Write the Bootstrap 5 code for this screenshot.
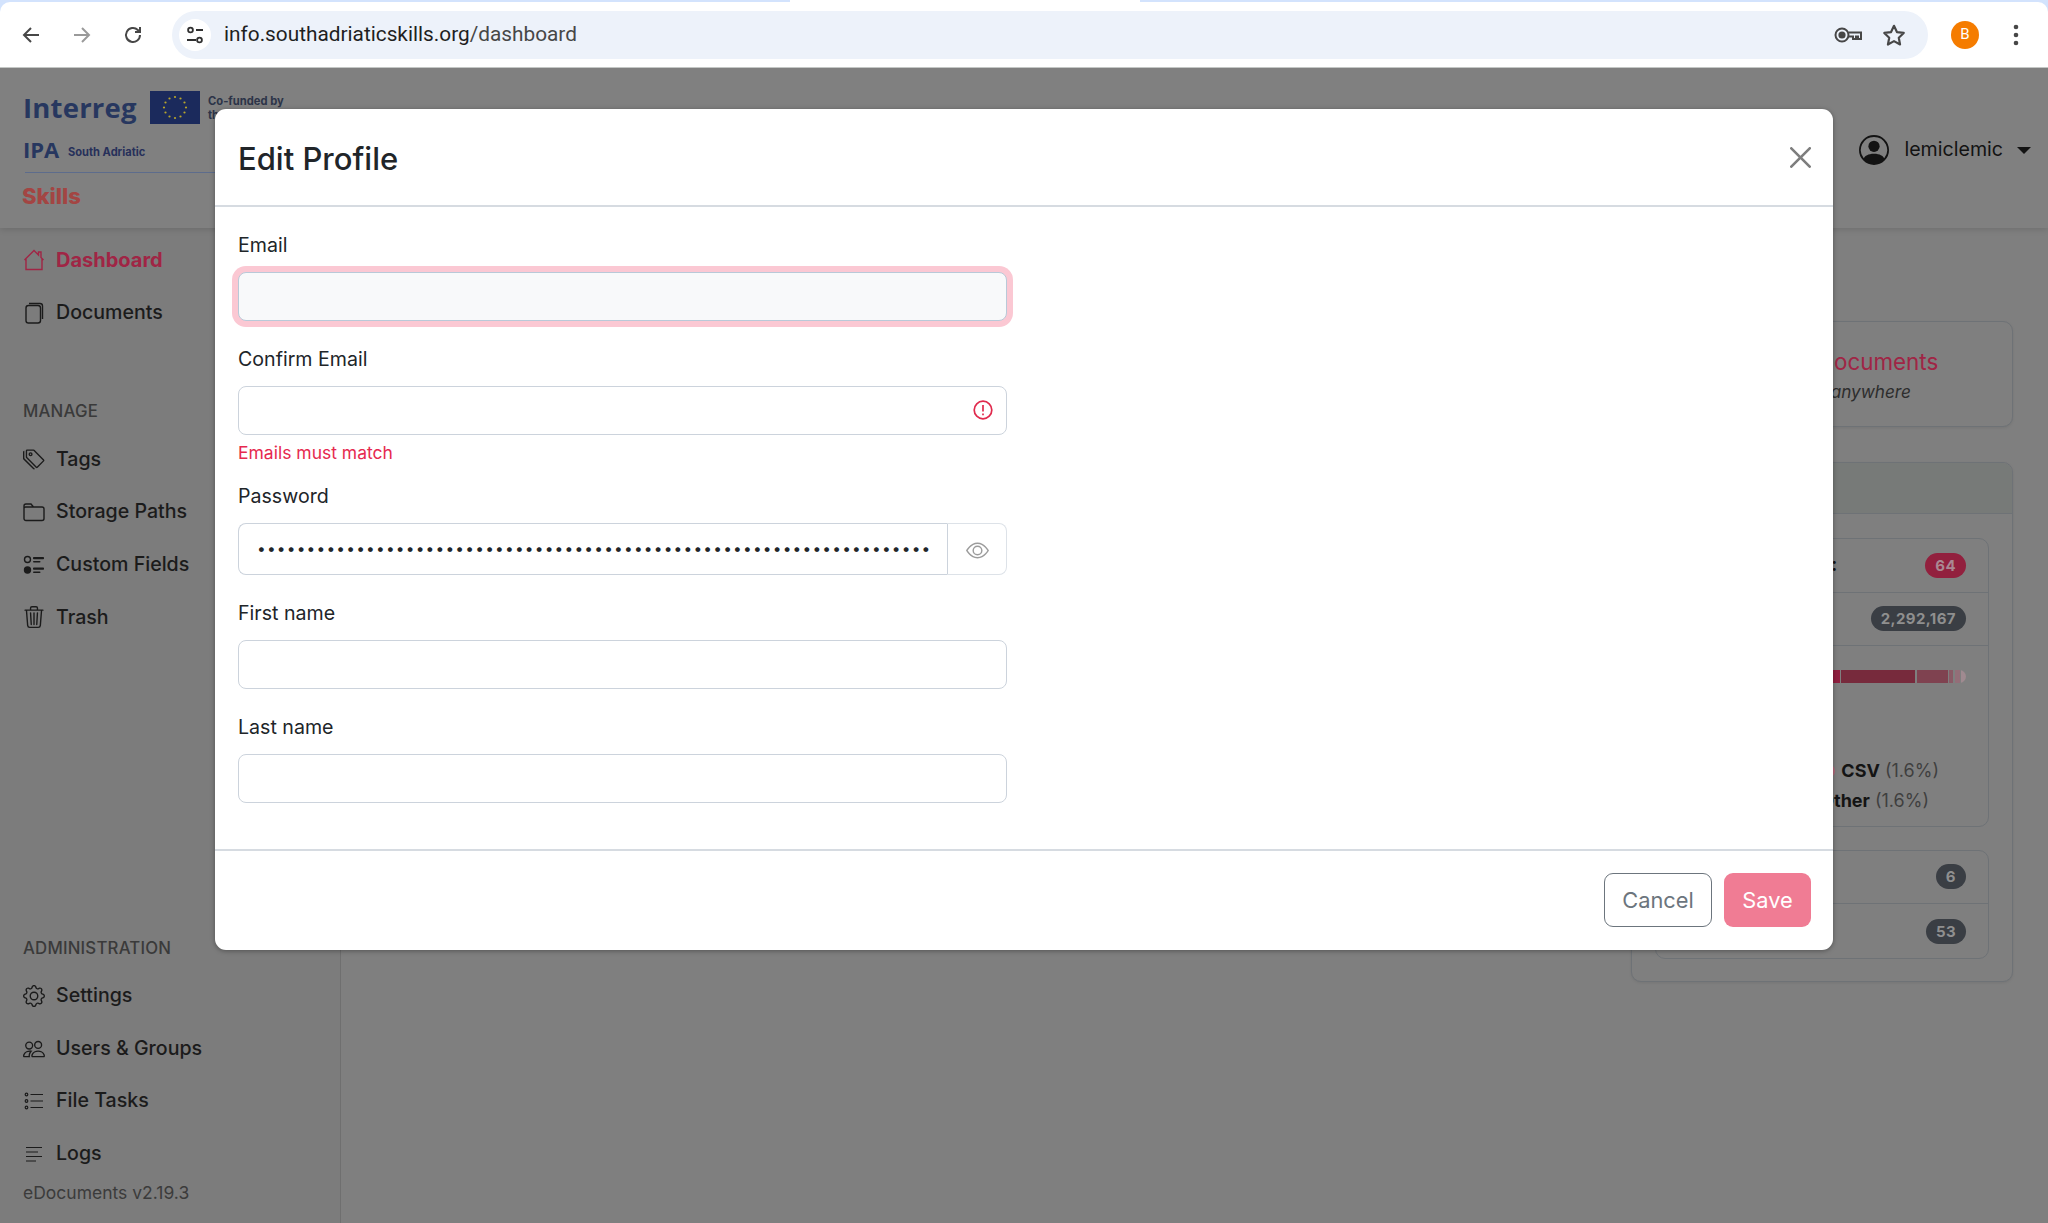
<!DOCTYPE html>
<html lang="en">
<head>
<meta charset="utf-8">
<title>Edit Profile</title>
<link href="https://cdn.jsdelivr.net/npm/bootstrap@5.3.0/dist/css/bootstrap.min.css" rel="stylesheet">
<style>
html,body{height:100%;overflow:hidden}
body{font-family:Inter,"Liberation Sans",sans-serif;font-size:19.6px;color:#212529;background:#d3e3fd}
.chrome-bar{height:66px;margin-top:2px;background:#fff;border-radius:10px 10px 0 0;border-bottom:1px solid #c4c7c5;padding:0 21px 0 1px;position:relative}
.tab-gap{position:absolute;top:-2px;left:790px;width:350px;height:2px;background:#fff}
.chrome-icon{width:51px;display:flex;justify-content:center;color:#474747}
.omni{margin-left:14px;width:1756px;height:48px;background:#edf2fa;border-radius:24px;padding:0 21px 0 7px;color:#1f1f1f;font-family:Roboto,Inter,sans-serif;font-size:20.8px}
.omni-tune{width:32px;height:32px;border-radius:50%;background:#fff;margin-right:13px;flex:none}
.url-rest{color:#474747}
.star-gap{margin-left:19px}
.avatar{width:28px;height:28px;border-radius:50%;background:#f57c00;color:#fff;font-size:15px;font-family:Roboto,sans-serif;margin-left:23px}
.app-area{position:relative;height:1155px;overflow:hidden;background:#7f7f7f}
.top-nav{height:160px;background:#808080;box-shadow:0 2px 6px rgba(0,0,0,.12);position:relative;z-index:2;padding:0 17px 0 23px}
.logo-block{width:318px;height:160px;flex:none}
.logo-one{height:56px;padding-top:23px}
.logo-word{font-family:"Open Sans",Inter,sans-serif;font-weight:700;font-size:27.5px;line-height:33px;color:#27375f;width:127px;letter-spacing:.2px}
.eu-flag{width:50px;height:33px;flex:none}
.cofund{font-weight:700;font-size:11.2px;line-height:14px;color:#2c3448;margin-left:8px;white-space:nowrap;padding-top:3px}
.logo-two{height:48px;padding-top:13px}
.ipa-word{font-family:"Open Sans",Inter,sans-serif;font-weight:700;font-size:22px;line-height:25px;color:#27375f;width:45px}
.ipa-sub{font-weight:700;font-size:11.1px;color:#27305a;padding-top:7px}
.logo-rule{height:1px;background:#5d6c8c;margin-left:2px}
.logo-skills{font-weight:800;font-size:22px;line-height:28px;color:#a34543;margin-top:9px;margin-left:-1px}
.user-name{font-size:19.6px;color:#131313;margin:0 14px 0 15px}
.user-caret{width:0;height:0;border:7px solid transparent;border-top:7px solid #131313;border-bottom:0}
.user-wrap{color:#131313;margin-top:67px}
.under-row{height:995px}
.side-col{width:341px;flex:none;background:#7c7c7c;border-right:1px solid #6f6f6f;padding:6px 0 17px}
.side-link{height:52.6px;padding:0 0 0 23px;color:#1b1b1b;font-weight:500;font-size:19.6px;gap:11px}
.side-link svg{width:22px;height:22px;flex:none}
.side-active{color:#a02545;font-weight:700;font-size:20px}
.side-head{font-size:16.8px;line-height:26px;font-weight:500;color:#3a3a3a;padding-left:23px;margin-bottom:9px;letter-spacing:.2px}
.side-head-manage{margin-top:59px}
.side-ver{font-size:17.5px;line-height:26px;color:#3b3b3b;padding-left:23px}
.main-col{padding:93px 35px 0 0}
.right-col{width:382px}
.dim-card{background:#7f7f7f;border:1.5px solid #6e7276;border-radius:10px;box-shadow:0 1px 3px rgba(0,0,0,.08)}
.drop-card{height:106px;margin-bottom:35px}
.drop-title{font-size:22.4px;line-height:30px;color:#a02545;margin-top:25px;padding-right:18px}
.drop-sub{font-size:17.2px;line-height:26px;font-style:italic;color:#2d2d2d;margin-top:2px;white-space:nowrap;padding-right:42px}
.stat-card{height:520px}
.stat-head{height:51px;background:#777a78;border-bottom:1.5px solid #6e7276;border-radius:9px 9px 0 0}
.stat-body{padding:24px 23px}
.stat-list{border:1.5px solid #6e7276;border-radius:10px;margin-bottom:23px}
.stat-row{height:53.6px;padding:0 22px;border-bottom:1.5px solid #6e7276;color:#151515}
.stat-row:last-child{border-bottom:0}
.stat-tall{height:179.5px;display:block;padding:24px 22px 0}
.stat-label{font-weight:600;white-space:nowrap;font-size:19px}
.stat-pill{font-size:15px;font-weight:700;padding:0 10px;height:25px;line-height:25px;border-radius:13px;background:#3a3e44;color:#8f8f8f;letter-spacing:.4px}
.stat-pill-red{background:#92203e;color:#a98892}
.bar-track{height:13px;gap:1.5px;border-radius:7px;overflow:hidden}
.legend-line{font-size:18px;line-height:30px;color:#3f3f3f;white-space:nowrap}
.legend-line b{font-weight:700;color:#141414}
.legend-first{margin:73px 27px 0 0}
.legend-second{margin-right:37px}
.legend-dot{width:14px;height:14px;border-radius:50%;background:#b5697b;margin-right:6px}
.profile-modal{position:absolute;top:0;left:0;width:100%;height:100%;z-index:5}
.profile-dialog{width:1618px;max-width:none;margin:41px 0 0 215px}
.profile-content{border:0;border-radius:11px;box-shadow:0 1px 5px rgba(0,0,0,.35)}
.profile-head{height:98px;padding:0 22px 0 23px;border-bottom:2px solid #d6dbe1}
.profile-title{font-size:31px;font-weight:500;color:#212529;margin-top:5px}
.profile-close{width:21px;height:21px;padding:0;margin:0;background-size:21px;opacity:.5}
.profile-body{padding:24px 23px 0;height:642px}
.form-col{width:769px}
.form-item{margin-bottom:23.7px}
.form-item-tight{margin-bottom:15.5px}
.form-item label{font-size:19.6px;line-height:29.4px;margin-bottom:11.6px;display:block;color:#212529}
.form-item .form-control{height:49px;font-size:19.6px;border:1.5px solid #ccd3dc;border-radius:8px;box-shadow:none}
.form-item .form-active{background:#f8f9fa;border-color:#b9c9d8;box-shadow:0 0 0 6px #fbc8d3}
.pw-input{height:52.5px!important;border-right:0!important;padding:0 17px 0 18px;border-top-right-radius:0!important;border-bottom-right-radius:0!important;font-size:15.5px!important;letter-spacing:1.2px;color:#212529}
.pw-eye{width:60px;background:#fff;border:1.5px solid #dde2e8;border-left-color:#ccd3dc;border-radius:0 8px 8px 0;justify-content:center;margin-left:0!important}
.pw-eye svg{margin-top:3px}
.err-icon{position:absolute;right:14px;top:14.5px;width:20px;height:20px;color:#e02a4d}
.err-text{font-size:17.5px;line-height:26px;color:#e6294f;margin-top:5.5px}
.profile-foot{height:101px;padding:0 22px 1px;border-top:2px solid #d6dbe1;gap:12px}
.profile-foot>*{margin:0}
.btn-plain{height:54px;width:108px;font-size:21.8px;padding:0;border:1.5px solid #6c757d;color:#6c757d;border-radius:9px;background:#fff}
.btn-save{height:54px;width:87px;font-size:21.8px;padding:0;background:#f07c94;border:0;color:#fff;border-radius:9px;opacity:1}
.btn-save:disabled{background:#f07c94;color:#fff;opacity:1}
</style>
</head>
<body>
<header class="chrome-bar d-flex align-items-center">
  <div class="tab-gap"></div>
  <div class="d-flex ps-1">
    <span class="chrome-icon"><svg width="24" height="24" viewBox="0 0 24 24" fill="none" stroke="currentColor" stroke-width="2"><path d="M20 12H5M12 5l-7 7 7 7"/></svg></span>
    <span class="chrome-icon"><svg width="24" height="24" viewBox="0 0 24 24" fill="none" stroke="#9a9a9a" stroke-width="2"><path d="M4 12h15M12 5l7 7-7 7"/></svg></span>
    <span class="chrome-icon"><svg width="24" height="24" viewBox="0 0 24 24" fill="none" stroke="currentColor" stroke-width="2"><path d="M19 12a7 7 0 1 1-2.2-5.1L19 9M19 4v5h-5"/></svg></span>
  </div>
  <div class="omni d-flex align-items-center">
    <span class="omni-tune d-flex align-items-center justify-content-center"><svg width="20" height="20" viewBox="0 0 20 20" fill="none" stroke="#303030" stroke-width="1.8"><circle cx="5.5" cy="5" r="2.4"/><path d="M11 5h7M2 15h9"/><circle cx="14.5" cy="15" r="2.4"/></svg></span>
    <span>info.southadriaticskills.org<span class="url-rest">/dashboard</span></span>
    <svg class="ms-auto" width="28" height="18" viewBox="0 0 28 18" fill="none" stroke="#474747" stroke-width="2"><circle cx="8" cy="9" r="6.5"/><circle cx="8" cy="9" r="2.6" fill="#474747"/><path d="M14.500 6.500H27V13h-3v-2.500h-2V13h-3v-2.500h-4.500"/></svg>
    <svg class="star-gap" width="26" height="26" viewBox="0 0 24 24" fill="none" stroke="#474747" stroke-width="2" stroke-linejoin="round"><path d="M12 3.500l2.700 5.800 6.300.8-4.600 4.400 1.200 6.300-5.600-3.100-5.600 3.100 1.200-6.300L3 10.100l6.300-.8z"/></svg>
  </div>
  <span class="avatar d-flex align-items-center justify-content-center">B</span>
  <svg class="ms-auto me-2" width="6" height="22" viewBox="0 0 6 22" fill="#474747"><circle cx="3" cy="3" r="2.300"/><circle cx="3" cy="11" r="2.300"/><circle cx="3" cy="19" r="2.300"/></svg>
</header>

<div class="app-area">
  <nav class="top-nav d-flex justify-content-between align-items-start">
    <div class="logo-block">
      <div class="logo-one d-flex align-items-start">
        <span class="logo-word">Interreg</span>
        <svg class="eu-flag" viewBox="0 0 50 33"><rect width="50" height="33" fill="#1b2a5c"/><g fill="#b7a52b"><circle cx="25" cy="6" r="1.100"/><circle cx="30.500" cy="7.500" r="1.100"/><circle cx="34.500" cy="11.500" r="1.100"/><circle cx="36" cy="16.500" r="1.100"/><circle cx="34.500" cy="21.500" r="1.100"/><circle cx="30.500" cy="25.500" r="1.100"/><circle cx="25" cy="27" r="1.100"/><circle cx="19.500" cy="25.500" r="1.100"/><circle cx="15.500" cy="21.500" r="1.100"/><circle cx="14" cy="16.500" r="1.100"/><circle cx="15.500" cy="11.500" r="1.100"/><circle cx="19.500" cy="7.500" r="1.100"/></g></svg>
        <span class="cofund">Co-funded by<br>the European Union</span>
      </div>
      <div class="logo-two d-flex align-items-start"><span class="ipa-word">IPA</span><span class="ipa-sub">South Adriatic</span></div>
      <div class="logo-rule"></div>
      <div class="logo-skills">Skills</div>
    </div>
    <div class="user-wrap d-flex align-items-center">
      <svg width="30" height="30" viewBox="0 0 16 16" fill="currentColor"><path d="M11 6a3 3 0 1 1-6 0 3 3 0 0 1 6 0z"/><path d="M0 8a8 8 0 1 1 16 0A8 8 0 0 1 0 8zm8-7a7 7 0 0 0-5.468 11.37C3.242 11.226 4.805 10 8 10s4.757 1.225 5.468 2.37A7 7 0 0 0 8 1z"/></svg>
      <span class="user-name">lemiclemic</span>
      <span class="user-caret"></span>
    </div>
  </nav>

  <div class="under-row d-flex">
    <aside class="side-col d-flex flex-column">
      <a class="side-link side-active d-flex align-items-center text-decoration-none" href="#"><svg viewBox="0 0 22 22" fill="none" stroke="currentColor" stroke-width="1.4"><path d="M1.500 11L11 1.500l4.500 4.500V3h2.500v5.500l2.500 2.500M3 9.500V20.500h16V9.500"/></svg>Dashboard</a>
      <a class="side-link d-flex align-items-center text-decoration-none" href="#"><svg viewBox="0 0 22 22" fill="none" stroke="currentColor" stroke-width="1.4"><rect x="3" y="3.500" width="14.500" height="17.500" rx="2.500"/><path d="M6 1.500h11a2.500 2.500 0 0 1 2.500 2.500v13"/></svg>Documents</a>

      <div class="side-head side-head-manage">MANAGE</div>
      <a class="side-link d-flex align-items-center text-decoration-none" href="#"><svg viewBox="0 0 16 16" fill="currentColor"><path d="M3 2v4.586l7 7L14.586 9l-7-7H3zM2 2a1 1 0 0 1 1-1h4.586a1 1 0 0 1 .707.293l7 7a1 1 0 0 1 0 1.414l-4.586 4.586a1 1 0 0 1-1.414 0l-7-7A1 1 0 0 1 2 6.586V2z"/><path d="M5.500 5a.5.5 0 1 1 0-1 .5.5 0 0 1 0 1zm0 1a1.500 1.500 0 1 0 0-3 1.500 1.500 0 0 0 0 3zM1 7.086a1 1 0 0 0 .293.707L8.750 15.250l-.043.043a1 1 0 0 1-1.414 0l-7-7A1 1 0 0 1 0 7.586V3a1 1 0 0 1 1-1v5.086z"/></svg>Tags</a>
      <a class="side-link d-flex align-items-center text-decoration-none" href="#"><svg viewBox="0 0 22 22" fill="none" stroke="currentColor" stroke-width="1.400"><path d="M1 17.500V5a2 2 0 0 1 2-2h5l2.500 3H19a2 2 0 0 1 2 2v9.500a2 2 0 0 1-2 2H3a2 2 0 0 1-2-2zM1 7.500a1.500 1.500 0 0 1 1.500-1.500H10.500"/></svg>Storage Paths</a>
      <a class="side-link d-flex align-items-center text-decoration-none" href="#"><svg viewBox="0 0 22 22" fill="currentColor"><circle cx="4.500" cy="5.500" r="3" fill="none" stroke="currentColor" stroke-width="1.400"/><circle cx="4.500" cy="16" r="3.700"/><rect x="10" y="3" width="11" height="2.300" rx=".8"/><rect x="10" y="7" width="7.500" height="1.600" rx=".8"/><rect x="10" y="13.500" width="11" height="2.300" rx=".8"/><rect x="10" y="17.500" width="7.500" height="1.600" rx=".8"/></svg>Custom Fields</a>
      <a class="side-link d-flex align-items-center text-decoration-none" href="#"><svg viewBox="0 0 16 16" fill="currentColor"><path d="M6.500 1h3a.5.5 0 0 1 .5.500v1H6v-1a.5.5 0 0 1 .5-.5ZM11 2.500v-1A1.500 1.500 0 0 0 9.500 0h-3A1.500 1.500 0 0 0 5 1.500v1H1.500a.5.5 0 0 0 0 1h.538l.853 10.660A2 2 0 0 0 4.885 16h6.230a2 2 0 0 0 1.994-1.840l.853-10.660h.538a.5.5 0 0 0 0-1H11Zm1.958 1-.846 10.580a1 1 0 0 1-.997.920h-6.230a1 1 0 0 1-.997-.920L3.042 3.500h9.916Zm-7.487 1a.5.5 0 0 1 .528.470l.5 8.500a.5.5 0 0 1-.998.060L5 5.030a.5.5 0 0 1 .470-.530Zm5.058 0a.5.5 0 0 1 .470.530l-.5 8.500a.5.5 0 1 1-.998-.060l.5-8.500a.5.5 0 0 1 .528-.470ZM8 4.500a.5.5 0 0 1 .5.500v8.500a.5.5 0 0 1-1 0V5a.5.5 0 0 1 .5-.5Z"/></svg>Trash</a>

      <div class="side-head mt-auto">ADMINISTRATION</div>
      <a class="side-link d-flex align-items-center text-decoration-none" href="#"><svg viewBox="0 0 16 16" fill="currentColor"><path d="M8 4.754a3.246 3.246 0 1 0 0 6.492 3.246 3.246 0 0 0 0-6.492zM5.754 8a2.246 2.246 0 1 1 4.492 0 2.246 2.246 0 0 1-4.492 0z"/><path d="M9.796 1.343c-.527-1.790-3.065-1.790-3.592 0l-.094.319a.873.873 0 0 1-1.255.520l-.292-.160c-1.640-.892-3.433.902-2.540 2.541l.159.292a.873.873 0 0 1-.520 1.255l-.319.094c-1.790.527-1.790 3.065 0 3.592l.319.094a.873.873 0 0 1 .520 1.255l-.160.292c-.892 1.640.901 3.434 2.541 2.540l.292-.159a.873.873 0 0 1 1.255.520l.094.319c.527 1.790 3.065 1.790 3.592 0l.094-.319a.873.873 0 0 1 1.255-.520l.292.160c1.640.893 3.434-.902 2.540-2.541l-.159-.292a.873.873 0 0 1 .520-1.255l.319-.094c1.790-.527 1.790-3.065 0-3.592l-.319-.094a.873.873 0 0 1-.520-1.255l.160-.292c.893-1.640-.902-3.433-2.541-2.540l-.292.159a.873.873 0 0 1-1.255-.520l-.094-.319zm-2.633.283c.246-.835 1.428-.835 1.674 0l.094.319a1.873 1.873 0 0 0 2.693 1.115l.291-.160c.764-.415 1.600.420 1.184 1.185l-.159.292a1.873 1.873 0 0 0 1.116 2.692l.318.094c.835.246.835 1.428 0 1.674l-.319.094a1.873 1.873 0 0 0-1.115 2.693l.160.291c.415.764-.420 1.600-1.185 1.184l-.291-.159a1.873 1.873 0 0 0-2.693 1.116l-.094.318c-.246.835-1.428.835-1.674 0l-.094-.319a1.873 1.873 0 0 0-2.692-1.115l-.292.160c-.764.415-1.600-.420-1.184-1.185l.159-.291A1.873 1.873 0 0 0 1.945 8.930l-.319-.094c-.835-.246-.835-1.428 0-1.674l.319-.094A1.873 1.873 0 0 0 3.060 4.377l-.160-.292c-.415-.764.420-1.600 1.185-1.184l.292.159a1.873 1.873 0 0 0 2.692-1.115l.094-.319z"/></svg>Settings</a>
      <a class="side-link d-flex align-items-center text-decoration-none" href="#"><svg viewBox="0 0 16 16" fill="currentColor"><path d="M15 14s1 0 1-1-1-4-5-4-5 3-5 4 1 1 1 1h8Zm-7.978-1A.261.261 0 0 1 7 12.996c.001-.264.167-1.030.760-1.720C8.312 10.629 9.282 10 11 10c1.717 0 2.687.630 3.240 1.276.593.690.758 1.457.760 1.720l-.008.002a.274.274 0 0 1-.014.002H7.022ZM11 7a2 2 0 1 0 0-4 2 2 0 0 0 0 4Zm3-2a3 3 0 1 1-6 0 3 3 0 0 1 6 0ZM6.936 9.280a5.880 5.880 0 0 0-1.230-.247A7.350 7.350 0 0 0 5 9c-4 0-5 3-5 4 0 .667.333 1 1 1h4.216A2.238 2.238 0 0 1 5 13c0-1.010.377-2.042 1.090-2.904.243-.294.526-.569.846-.816ZM4.920 10A5.493 5.493 0 0 0 4 13H1c0-.260.164-1.030.760-1.724.545-.636 1.492-1.256 3.160-1.275ZM1.500 5.500a3 3 0 1 1 6 0 3 3 0 0 1-6 0Zm3-2a2 2 0 1 0 0 4 2 2 0 0 0 0-4Z"/></svg>Users &amp; Groups</a>
      <a class="side-link d-flex align-items-center text-decoration-none" href="#"><svg viewBox="0 0 22 22" fill="none" stroke="currentColor" stroke-width="1.200"><circle cx="3.500" cy="4.500" r="1.300"/><circle cx="3.500" cy="11" r="1.300"/><circle cx="3.500" cy="17.500" r="1.300"/><path d="M7.500 4.500H20M7.500 11H20M7.500 17.500H20"/></svg>File Tasks</a>
      <a class="side-link d-flex align-items-center text-decoration-none" href="#"><svg viewBox="0 0 22 22" fill="none" stroke="currentColor" stroke-width="1.200"><path d="M3 4.500h16M3 9h12M3 13.500h16M3 18h10"/></svg>Logs</a>
      <div class="side-ver">eDocuments v2.19.3</div>
    </aside>

    <main class="main-col flex-grow-1 d-flex justify-content-end">
      <div class="right-col">
        <section class="dim-card drop-card text-center">
          <div class="drop-title">Upload new documents</div>
          <div class="drop-sub">Drop documents anywhere</div>
        </section>
        <section class="dim-card stat-card">
          <div class="stat-head"></div>
          <div class="stat-body">
            <div class="stat-list">
              <div class="stat-row d-flex align-items-center justify-content-between"><span class="stat-label">Total documents:</span><span class="stat-pill stat-pill-red">64</span></div>
              <div class="stat-row d-flex align-items-center justify-content-between"><span>Characters:</span><span class="stat-pill">2,292,167</span></div>
              <div class="stat-row stat-tall">
                <div class="bar-track d-flex">
                  <span class="flex-grow-1" style="background:#8f1f3f"></span>
                  <span style="width:74px;background:#772a3c"></span>
                  <span style="width:31px;background:#7f4250"></span>
                  <span style="width:4px;background:#8a5a66"></span>
                  <span style="width:5px;background:#936e78"></span>
                  <span style="width:5px;background:#a08a90"></span>
                </div>
                <div class="legend-line legend-first d-flex justify-content-end align-items-center"><span class="legend-dot"></span><b>CSV</b>&nbsp;(1.6%)</div>
                <div class="legend-line legend-second d-flex justify-content-end"><b>Other</b>&nbsp;(1.6%)</div>
              </div>
            </div>
            <div class="stat-list">
              <div class="stat-row d-flex align-items-center justify-content-between"><span>Tags:</span><span class="stat-pill">6</span></div>
              <div class="stat-row d-flex align-items-center justify-content-between"><span>Correspondents:</span><span class="stat-pill">53</span></div>
            </div>
          </div>
        </section>
      </div>
    </main>
  </div>

  <div class="modal d-block profile-modal" tabindex="-1">
    <div class="modal-dialog profile-dialog">
      <div class="modal-content profile-content">
        <div class="modal-header profile-head">
          <h4 class="modal-title profile-title mb-0">Edit Profile</h4>
          <button type="button" class="btn-close profile-close" aria-label="Close"></button>
        </div>
        <div class="modal-body profile-body">
          <div class="form-col">
            <div class="form-item"><label for="f1">Email</label><input id="f1" class="form-control form-active" type="text"></div>
            <div class="form-item form-item-tight"><label for="f2">Confirm Email</label>
              <div class="position-relative"><input id="f2" class="form-control" type="text">
                <svg class="err-icon" viewBox="0 0 20 20" fill="none" stroke="currentColor" stroke-width="1.700"><circle cx="10" cy="10" r="8.800"/><path d="M10 5v6.500M10 13.500v1.700"/></svg>
              </div>
              <div class="err-text">Emails must match</div>
            </div>
            <div class="form-item"><label for="f3">Password</label>
              <div class="input-group">
                <input id="f3" class="form-control pw-input" type="password" value="aaaaaaaaaaaaaaaaaaaaaaaaaaaaaaaaaaaaaaaaaaaaaaaaaaaaaaaaaaaaaaaaaaaaaaaaaaaaaaaaaaaaaaaaaaaaaaaaaaaaaa">
                <span class="input-group-text pw-eye"><svg width="23" height="23" viewBox="0 0 16 16" fill="#9c9c9c"><path d="M16 8s-3-5.500-8-5.500S0 8 0 8s3 5.500 8 5.500S16 8 16 8zM1.173 8a13.133 13.133 0 0 1 1.660-2.043C4.120 4.668 5.880 3.500 8 3.500c2.120 0 3.879 1.168 5.168 2.457A13.133 13.133 0 0 1 14.828 8c-.058.087-.122.183-.195.288-.335.480-.830 1.120-1.465 1.755C11.879 11.332 10.119 12.500 8 12.500c-2.120 0-3.879-1.168-5.168-2.457A13.134 13.134 0 0 1 1.172 8z"/><path d="M8 5.500a2.500 2.500 0 1 0 0 5 2.500 2.500 0 0 0 0-5zM4.500 8a3.500 3.500 0 1 1 7 0 3.500 3.500 0 0 1-7 0z"/></svg></span>
              </div>
            </div>
            <div class="form-item"><label for="f4">First name</label><input id="f4" class="form-control" type="text"></div>
            <div class="form-item"><label for="f5">Last name</label><input id="f5" class="form-control" type="text"></div>
          </div>
        </div>
        <div class="modal-footer profile-foot">
          <button type="button" class="btn btn-plain">Cancel</button>
          <button type="button" class="btn btn-save" disabled>Save</button>
        </div>
      </div>
    </div>
  </div>
</div>
<script src="https://cdn.jsdelivr.net/npm/bootstrap@5.3.0/dist/js/bootstrap.bundle.min.js"></script>
</body>
</html>
